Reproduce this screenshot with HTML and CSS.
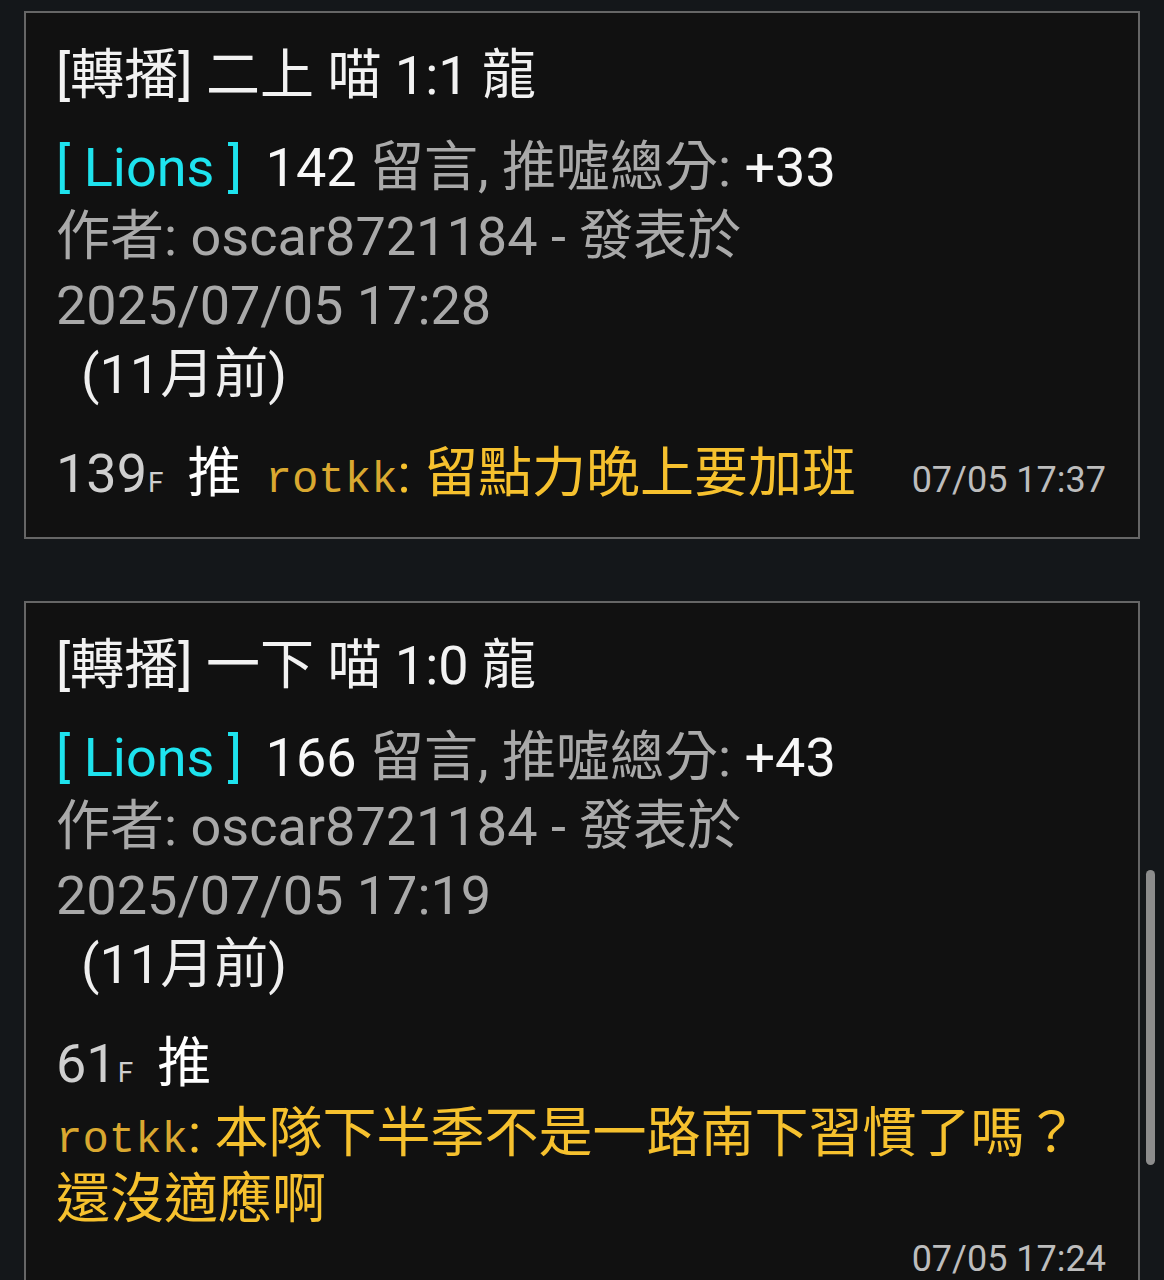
FILE: index.html
```
<!DOCTYPE html>
<html lang="zh-Hant">
<head>
    <meta charset="UTF-8">
    <meta name="viewport" content="width=device-width, initial-scale=1.0">
    <title>PTT Lions</title>
    <link rel="stylesheet" href="styles.css">
</head>
<body>
    <div class="screen">
        <div class="feed">
            <article class="card">
                <div class="title">[轉播] 二上 喵 1:1 龍</div>
                <div class="meta">
                    <div><span class="board">[ Lions ]</span> <span class="num">142</span> 留言, 推噓總分: <span class="num">+33</span></div>
                    <div>作者: oscar8721184 - 發表於 <span class="date">2025/07/05 17:28</span></div>
                    <div class="ago">(11月前)</div>
                </div>
                <div class="push">
                    <span class="floor">139<small>F</small></span>
                    <span class="tag">推</span>
                    <span class="content"><span class="user">rotkk</span>: 留點力晚上要加班</span>
                    <span class="time">07/05 17:37</span>
                </div>
            </article>

            <article class="card">
                <div class="title">[轉播] 一下 喵 1:0 龍</div>
                <div class="meta">
                    <div><span class="board">[ Lions ]</span> <span class="num">166</span> 留言, 推噓總分: <span class="num">+43</span></div>
                    <div>作者: oscar8721184 - 發表於 <span class="date">2025/07/05 17:19</span></div>
                    <div class="ago">(11月前)</div>
                </div>
                <div class="push">
                    <span class="floor">61<small>F</small></span>
                    <span class="tag">推</span>
                    <span class="content"><span class="user">rotkk</span>: 本隊下半季不是一路南下習慣了嗎？還沒適應啊</span>
                    <span class="time">07/05 17:24</span>
                </div>
            </article>
        </div>
        <div class="scroll-thumb"></div>
    </div>
</body>
</html>
```

FILE: styles.css
```
html, body {
    margin: 0;
    padding: 0;
    background-color: #14171a;
}
body {
    font-family: Roboto, "Noto Sans CJK TC", sans-serif;
    color: #f2f2f2;
}
.screen {
    position: relative;
    height: 100vh;
    overflow: hidden;
}
.feed {
    display: flex;
    flex-direction: column;
    gap: 62px;
    padding: 11px 24px 0 24px;
}
.card {
    background: #111111;
    border: 2px solid #666666;
    padding: 28px 32px 29px 30px;
    font-size: 54px;
    line-height: 69px;
}
.title {
    color: #f2f2f2;
    margin-bottom: 23px;
}
.meta {
    color: #a9a9a9;
}
.board {
    color: #1ee3ee;
    margin-right: 10px;
}
.num {
    color: #f7f7f7;
}
.date {
    white-space: nowrap;
}
.ago {
    color: #efefef;
    padding-left: 25px;
}
.push {
    display: flex;
    flex-wrap: wrap;
    align-items: baseline;
    column-gap: 24px;
    row-gap: 3px;
    margin-top: 30px;
}
.floor {
    color: #cfcfcf;
}
.floor small {
    font-size: 28px;
    line-height: 1;
    margin-left: 1px;
}
.tag {
    color: #ffffff;
}
.content {
    color: #f6c12e;
    line-height: 66px;
}
.user {
    font-family: "Courier New", "Nimbus Mono PS", FreeMono, "Liberation Mono", monospace;
    font-size: 44px;
    line-height: 1;
    color: #d9a830;
}
.time {
    margin-left: auto;
    font-size: 36px;
    line-height: 47px;
    color: #bdbdbd;
}
.scroll-thumb {
    position: absolute;
    left: 1146px;
    top: 870px;
    width: 9px;
    height: 295px;
    border-radius: 5px;
    background: #8c8c8c;
}
```
